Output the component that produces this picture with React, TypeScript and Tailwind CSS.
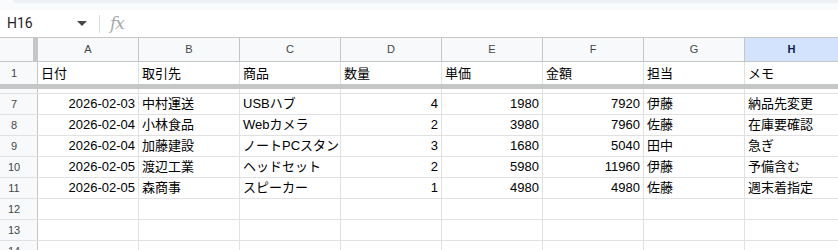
import React from 'react';

const COLS = ['A', 'B', 'C', 'D', 'E', 'F', 'G', 'H'];
const SELECTED_COL = 'H';

// 右寄せは数値列
const ROWS: { n: number; cells: string[] }[] = [
  { n: 7, cells: ['2026-02-03', '中村運送', 'USBハブ', '4', '1980', '7920', '伊藤', '納品先変更'] },
  { n: 8, cells: ['2026-02-04', '小林食品', 'Webカメラ', '2', '3980', '7960', '佐藤', '在庫要確認'] },
  { n: 9, cells: ['2026-02-04', '加藤建設', 'ノートPCスタンド', '3', '1680', '5040', '田中', '急ぎ'] },
  { n: 10, cells: ['2026-02-05', '渡辺工業', 'ヘッドセット', '2', '5980', '11960', '伊藤', '予備含む'] },
  { n: 11, cells: ['2026-02-05', '森商事', 'スピーカー', '1', '4980', '4980', '佐藤', '週末着指定'] },
];
const HEADER = ['日付', '取引先', '商品', '数量', '単価', '金額', '担当', 'メモ'];
const RIGHT = [true, false, false, true, true, true, false, false];

const font = "font-['Liberation_Sans','Noto_Sans_CJK_JP',sans-serif]";

function RowHead({ children }: { children?: React.ReactNode }) {
  return (
    <div className="w-[38px] shrink-0 bg-[#f8f9fa] border-r border-[#c4c7c5] flex items-center justify-center pr-[9px] text-[11px] text-[#444746]">
      {children}
    </div>
  );
}

function Cell({ value, right, last }: { value?: string; right?: boolean; last?: boolean }) {
  return (
    <div
      className={`${last ? 'flex-1' : 'w-[101px] shrink-0 border-r border-[#e1e1e1]'} overflow-hidden whitespace-nowrap flex items-end pb-[1px] px-[3px] text-[13px] text-black ${
        right ? 'justify-end' : 'justify-start'
      }`}
    >
      {value}
    </div>
  );
}

export default function App() {
  return (
    <div className={`w-[838px] h-[250px] overflow-hidden bg-white ${font}`}>
      {/* toolbar bottom edge */}
      <div className="h-[10px] bg-[#f9fbfd] pl-[13px]">
        <div className="h-[3px] bg-[#eef1f6] rounded-bl-[6px]" />
      </div>

      {/* formula bar */}
      <div className="h-[28px] flex items-center border-b border-[#c4c7c5] font-['Roboto',sans-serif]">
        <div className="w-[99px] flex items-center pl-[7px] pr-[12px] text-[14px] text-[#1f1f1f]">
          <span className="flex-1">H16</span>
          <svg width="10" height="5" viewBox="0 0 10 5">
            <path d="M0 0h10L5 5z" fill="#444746" />
          </svg>
        </div>
        <div className="w-px h-[18px] bg-[#dadce0]" />
        <span className="ml-[10px] text-[17px] italic text-[#a6a8ab] font-['DejaVu_Serif',serif] tracking-[-1px]">fx</span>
      </div>

      {/* column header */}
      <div className="h-[24px] flex border-b border-[#c4c7c5] bg-[#f8f9fa]">
        <div className="w-[38px] shrink-0 bg-[#f8f9fa] border-r border-[#c4c7c5] flex justify-end">
          <div className="w-[4px] bg-[#c4c7c5]" />
        </div>
        {COLS.map((c, i) => (
          <div
            key={c}
            className={`${i === COLS.length - 1 ? 'flex-1' : 'w-[101px] shrink-0 border-r border-[#c4c7c5]'} flex items-center justify-center text-[11px] ${
              c === SELECTED_COL ? 'bg-[#d3e3fd] text-[#0b1f4d] font-bold' : 'text-[#444746]'
            }`}
          >
            {c}
          </div>
        ))}
      </div>

      {/* row 1 (frozen) */}
      <div className="h-[22px] flex">
        <RowHead>1</RowHead>
        {HEADER.map((h, i) => (
          <Cell key={h} value={h} last={i === HEADER.length - 1} />
        ))}
      </div>

      {/* freeze bar */}
      <div className="h-[5px] bg-[#c4c7c5]" />

      {/* partial row under the freeze */}
      <div className="h-[5px] flex border-b border-[#e1e1e1]">
        <RowHead />
        {COLS.map((c, i) => (
          <Cell key={c} last={i === COLS.length - 1} />
        ))}
      </div>

      {ROWS.map((r) => (
        <div key={r.n} className="h-[21px] flex border-b border-[#e1e1e1]">
          <RowHead>{r.n}</RowHead>
          {r.cells.map((v, i) => (
            <Cell key={i} value={v} right={RIGHT[i]} last={i === r.cells.length - 1} />
          ))}
        </div>
      ))}

      {[12, 13, 14].map((n) => (
        <div key={n} className="h-[21px] flex border-b border-[#e1e1e1]">
          <RowHead>{n}</RowHead>
          {COLS.map((c, i) => (
            <Cell key={c} last={i === COLS.length - 1} />
          ))}
        </div>
      ))}
    </div>
  );
}
